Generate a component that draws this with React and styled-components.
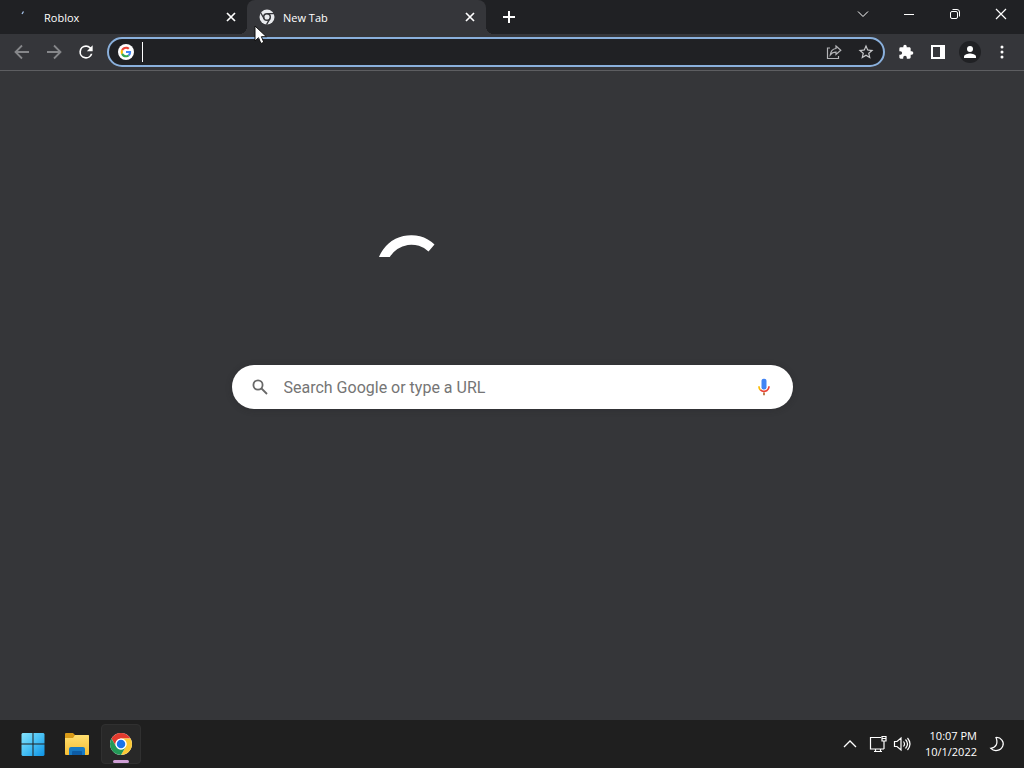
import React from 'react';
import styled, { createGlobalStyle } from 'styled-components';

const GlobalStyle = createGlobalStyle`
  * { box-sizing: border-box; }
  body {
    margin: 0;
    background: #353639;
    font-family: "Open Sans", "Noto Sans", sans-serif;
    font-size: 11px;
    color: #fff;
  }
  button, input { font: inherit; color: inherit; }
  svg { display: block; }
`;

const Desktop = styled.div`
  display: flex;
  flex-direction: column;
  min-height: 100vh;
`;

const TabStrip = styled.header`
  display: flex;
  height: 34px;
  background: #202124;
`;

const Tabs = styled.div`
  display: flex;
  padding-left: 8px;
`;

const Tab = styled.div`
  position: relative;
  display: flex;
  align-items: center;
  width: 239px;
  padding: 0 8px 0 12px;
  border-radius: 8px 8px 0 0;
  background: ${(p) => (p.$active ? '#35363a' : 'transparent')};

  &::before, &::after {
    content: "";
    display: ${(p) => (p.$active ? 'block' : 'none')};
    position: absolute;
    bottom: 0;
    width: 8px;
    height: 8px;
  }
  &::before {
    left: -8px;
    background: radial-gradient(circle at 0 0, transparent 8px, #35363a 8px);
  }
  &::after {
    right: -8px;
    background: radial-gradient(circle at 100% 0, transparent 8px, #35363a 8px);
  }
`;

const TabButton = styled.button`
  display: flex;
  flex: 1;
  align-items: center;
  gap: 8px;
  height: 34px;
  padding: 0;
  border: 0;
  background: none;
  text-align: left;
`;

const IconButton = styled.button`
  display: grid;
  place-items: center;
  flex: none;
  width: ${(p) => p.$w || 32}px;
  height: ${(p) => p.$h || 32}px;
  padding: 0;
  border: 0;
  background: none;
  color: ${(p) => p.$color || '#fff'};
`;

const NewTabButton = styled(IconButton)`
  margin: 3px 0 0 9px;
`;

const WindowControls = styled.div`
  display: flex;
  margin-left: auto;
`;

const Pointer = styled.svg`
  position: absolute;
  left: 7px;
  top: 25px;
  z-index: 2;
`;

const Toolbar = styled.div`
  display: flex;
  align-items: center;
  height: 37px;
  padding: 0 6px;
  background: #35363a;
  border-bottom: 1px solid #5d5e61;
`;

const AddressBar = styled.form`
  display: flex;
  flex: 1;
  align-items: center;
  height: 30px;
  margin: 0 5px;
  padding: 0 1px 0 9px;
  border: 2px solid #8ab0dc;
  border-radius: 15px;
  background: #202124;
`;

const AddressInput = styled.input`
  flex: 1;
  min-width: 0;
  height: 20px;
  margin-left: 8px;
  padding: 0 4px;
  border: 0;
  border-left: 1px solid #fff;
  outline: 0;
  background: none;
  font-size: 14px;
`;

const Page = styled.main`
  display: flex;
  flex: 1;
  flex-direction: column;
  align-items: center;
  gap: 42px;
  padding: 160px 32px 32px;
  background: #353639;
`;

const SearchBox = styled.form`
  display: flex;
  align-items: center;
  width: 100%;
  max-width: 561px;
  height: 44px;
  padding: 0 13px 0 20px;
  border-radius: 22px;
  background: #fff;
  box-shadow: 0 1px 6px rgba(32, 33, 36, 0.28);
`;

const SearchInput = styled.input`
  flex: 1;
  min-width: 0;
  margin-left: 16px;
  padding: 0;
  border: 0;
  outline: 0;
  background: none;
  color: #202124;
  font-family: Roboto, sans-serif;
  font-size: 16px;
  &::placeholder { color: #757575; opacity: 1; }
`;

const Taskbar = styled.footer`
  display: flex;
  align-items: center;
  justify-content: space-between;
  height: 48px;
  padding: 0 11px 0 13px;
  background: #1f1f1f;
`;

const TaskGroup = styled.div`
  display: flex;
  align-items: center;
  gap: ${(p) => p.$gap || 0}px;
`;

const TaskButton = styled.button`
  position: relative;
  display: grid;
  place-items: center;
  width: 40px;
  height: 40px;
  padding: 0;
  border: 1px solid ${(p) => (p.$active ? '#303030' : 'transparent')};
  border-radius: 4px;
  background: ${(p) => (p.$active ? '#282828' : 'none')};

  &::after {
    content: "";
    display: ${(p) => (p.$active ? 'block' : 'none')};
    position: absolute;
    bottom: 0;
    left: 11px;
    width: 16px;
    height: 3px;
    border-radius: 2px;
    background: #cf9fd6;
  }
`;

const Clock = styled.button`
  padding: 0;
  border: 0;
  margin: 0 4px 0 11px;
  background: none;
  text-align: right;
  line-height: 16px;
`;

const Line = ({ size = 16, width = 1, children }) => (
  <svg width={size} height={size} viewBox={`0 0 ${size} ${size}`} fill="none" stroke="currentColor" strokeWidth={width} aria-hidden="true">
    {children}
  </svg>
);

const Solid = ({ size = 18, d }) => (
  <svg width={size} height={size} viewBox="0 0 24 24" fill="currentColor" aria-hidden="true">
    <path d={d} />
  </svg>
);

const CloseGlyph = () => (
  <Line width={1.7}>
    <path d="M4 4l8 8M12 4l-8 8" />
  </Line>
);

const LoadingIcon = () => (
  <svg width="16" height="16" viewBox="0 0 16 16" fill="none" stroke="#a9c7ee" aria-hidden="true">
    <path d="M2 5l1.5-2.5" strokeWidth="1.3" />
  </svg>
);

const MonoChrome = () => (
  <svg width="16" height="16" viewBox="0 0 16 16" aria-hidden="true">
    <circle cx="8" cy="8" r="7.500" fill="#e8eaed" />
    <circle cx="8" cy="8" r="3.300" fill="#e8eaed" stroke="#35363a" strokeWidth="1.500" />
    <path d="M8 4.700h7M5.100 9.600L1.700 3.700M10.900 9.600l-3.400 6" stroke="#35363a" strokeWidth="1.300" />
  </svg>
);

const GoogleIcon = () => (
  <svg width="16" height="16" viewBox="-12 -12 72 72" aria-hidden="true">
    <circle cx="24" cy="24" r="36" fill="#fff" />
    <path fill="#EA4335" d="M24 9.5c3.54 0 6.71 1.22 9.21 3.6l6.85-6.85C35.9 2.38 30.47 0 24 0 14.62 0 6.51 5.38 2.56 13.22l7.98 6.19C12.43 13.72 17.74 9.5 24 9.5z" />
    <path fill="#4285F4" d="M46.98 24.55c0-1.57-.15-3.09-.38-4.55H24v9.02h12.94c-.58 2.96-2.26 5.48-4.78 7.18l7.73 6c4.51-4.18 7.09-10.36 7.09-17.65z" />
    <path fill="#FBBC05" d="M10.53 28.59A14.5 14.5 0 0 1 9.77 24c0-1.6.27-3.14.76-4.59l-7.98-6.19A23.9 23.9 0 0 0 0 24c0 3.88.92 7.54 2.56 10.78z" />
    <path fill="#34A853" d="M24 48c6.48 0 11.93-2.13 15.89-5.81l-7.73-6c-2.15 1.45-4.92 2.3-8.16 2.3-6.26 0-11.57-4.22-13.47-9.91l-7.98 6.19C6.51 42.62 14.62 48 24 48z" />
  </svg>
);

const Mic = () => (
  <svg width="20" height="20" viewBox="0 0 24 24" aria-hidden="true">
    <rect x="9" y="2" width="6" height="13" rx="2.600" fill="#4285f4" />
    <path d="M11 18.500h2V22h-2z" fill="#b0682c" />
    <path d="M5 11h2c0 1.500.5 2.800 1.400 3.700L7 16.200C5.700 15 5 13 5 11z" fill="#fbbc04" />
    <path d="M7.700 15.400C10.100 18 15 18.100 17 14.500c.7-1 1-2.100 1-3.500" fill="none" stroke="#ea4335" strokeWidth="2" />
  </svg>
);

const WindowsLogo = () => (
  <svg width="24" height="24" viewBox="0 0 24 24" aria-hidden="true">
    <defs>
      <linearGradient id="winBlue" x1="0" y1="0" x2="24" y2="24" gradientUnits="userSpaceOnUse">
        <stop stopColor="#8ae5fc" />
        <stop offset=".5" stopColor="#48c1f5" />
        <stop offset="1" stopColor="#0c91e4" />
      </linearGradient>
    </defs>
    <path fill="url(#winBlue)" d="M1.500 1H11.500V11.500H.5V2zM12.500 1H22.500l1 1v9.500h-11zM.5 12.500h11V24H1.500L.5 23zM12.500 12.500h11V23l-1 1h-10z" />
  </svg>
);

const Folder = () => (
  <svg width="26" height="24" viewBox="0 0 26 24" aria-hidden="true">
    <defs>
      <linearGradient id="folderFront" x1="0" y1="0" x2="0" y2="1">
        <stop stopColor="#ffdf70" />
        <stop offset="1" stopColor="#f5bd33" />
      </linearGradient>
    </defs>
    <path fill="#d99a17" d="M1 2q0-1 1-1h7l2 2h13q1 0 1 1v7H1z" />
    <path fill="url(#folderFront)" d="M1 6h8l2-3h13q1 0 1 1v18q0 1-1 1H2q-1 0-1-1z" />
    <path fill="#187ac3" d="M5 23v-6q0-2 2-2h12q2 0 2 2v6z" />
    <path fill="#0d5ca6" d="M8 23v-3q0-1 1-1h8q1 0 1 1v3z" />
  </svg>
);

const ChromeLogo = () => (
  <svg width="24" height="24" viewBox="0 0 48 48" aria-hidden="true">
    <circle cx="24" cy="24" r="22" fill="#fff" />
    <path fill="#e33b2e" d="M4.950 13A22 22 0 0 1 43.050 13H24A11 11 0 0 0 14.470 29.500z" />
    <path fill="#fcc934" d="M43.050 13A22 22 0 0 1 24 46L33.530 29.500A11 11 0 0 0 24 13z" />
    <path fill="#239957" d="M24 46A22 22 0 0 1 4.950 13L14.470 29.500A11 11 0 0 0 33.530 29.500z" />
    <circle cx="24" cy="24" r="11" fill="#fff" />
    <circle cx="24" cy="24" r="8.500" fill="#1a73e8" />
  </svg>
);

const stop = (event) => event.preventDefault();

export default function App() {
  return (
    <Desktop>
      <GlobalStyle />
      <TabStrip>
        <Tabs role="tablist">
          <Tab>
            <TabButton role="tab" aria-selected="false">
              <LoadingIcon />
              Roblox
            </TabButton>
            <IconButton $w={16} $h={16} aria-label="Close Roblox"><CloseGlyph /></IconButton>
          </Tab>
          <Tab $active>
            <TabButton role="tab" aria-selected="true">
              <MonoChrome />
              New Tab
            </TabButton>
            <IconButton $w={16} $h={16} aria-label="Close New Tab"><CloseGlyph /></IconButton>
            <Pointer width="14" height="20" viewBox="0 0 14 20" aria-hidden="true">
              <path d="M1 1v15l3.500-3.300 2.400 5.800 2.900-1.200-2.400-5.600h5z" fill="#fff" stroke="#111" strokeWidth="1" />
            </Pointer>
          </Tab>
        </Tabs>
        <NewTabButton $w={28} $h={28} aria-label="New tab">
          <Line width={2}><path d="M8 2v12M2 8h12" /></Line>
        </NewTabButton>
        <WindowControls>
          <IconButton $w={46} $h={28} aria-label="Search tabs"><Line><path d="M3 5.500l5 5 5-5" /></Line></IconButton>
          <IconButton $w={46} $h={28} aria-label="Minimize"><Line><path d="M3 8.500h10" /></Line></IconButton>
          <IconButton $w={46} $h={28} aria-label="Restore">
            <Line><rect x="3.500" y="5.500" width="7" height="7" rx="1.500" /><path d="M5.500 3.500H10Q12.500 3.500 12.500 6v4.500" /></Line>
          </IconButton>
          <IconButton $w={46} $h={28} aria-label="Close window"><Line width={1.2}><path d="M3 3l10 10M13 3L3 13" /></Line></IconButton>
        </WindowControls>
      </TabStrip>

      <Toolbar>
        <IconButton $color="#86878a" aria-label="Back"><Line width={1.8}><path d="M15 8H2M8 1.500L1.500 8 8 14.500" /></Line></IconButton>
        <IconButton $color="#86878a" aria-label="Forward"><Line width={1.8}><path d="M1 8h13M8 1.500L14.500 8 8 14.500" /></Line></IconButton>
        <IconButton aria-label="Reload">
          <Solid size={20} d="M17.650 6.350A7.960 7.960 0 0 0 12 4a8 8 0 1 0 7.730 10h-2.080A6 6 0 1 1 12 6c1.660 0 3.140.69 4.220 1.780L13 11h7V4z" />
        </IconButton>
        <AddressBar onSubmit={stop}>
          <GoogleIcon />
          <AddressInput aria-label="Address and search bar" />
          <IconButton $color="#b4b5b8" aria-label="Share this page">
            <Line width={1.2}>
              <path d="M4 4H1.500v10.500h11V12M10 2l4.800 4.200L10 10.500V8.200c-2.600 0-4.300.7-5.700 2.600C4.700 7.400 6.500 5 10 4.500z" />
            </Line>
          </IconButton>
          <IconButton $color="#c8c9cb" aria-label="Bookmark this tab">
            <Solid d="M22 9.240l-7.190-.62L12 2 9.190 8.630 2 9.240l5.460 4.730L5.820 21 12 17.270 18.180 21l-1.630-7.030zM12 15.400l-3.760 2.270 1-4.280-3.320-2.880 4.380-.38L12 6.100l1.710 4.040 4.380.38-3.320 2.880 1 4.280z" />
          </IconButton>
        </AddressBar>
        <IconButton aria-label="Extensions">
          <Solid size={16} d="M20.500 11H19V7c0-1.100-.9-2-2-2h-4V3.500a2.500 2.500 0 0 0-5 0V5H4a2 2 0 0 0-1.990 2v3.800H3.500a2.700 2.700 0 0 1 0 5.400H2V20c0 1.100.9 2 2 2h3.800v-1.500a2.700 2.700 0 0 1 5.400 0V22H17c1.100 0 2-.9 2-2v-4h1.500a2.500 2.500 0 0 0 0-5z" />
        </IconButton>
        <IconButton aria-label="Side panel">
          <Line width={2}><path d="M2 2h12v12H2z" /><path d="M10 2h4v12h-4z" fill="currentColor" stroke="none" /></Line>
        </IconButton>
        <IconButton aria-label="Profile">
          <svg width="24" height="24" viewBox="0 0 24 24" aria-hidden="true">
            <circle cx="12" cy="12" r="11" fill="#202124" />
            <circle cx="12" cy="9" r="3" fill="#fff" />
            <path d="M6 18v-1.500c0-2 4-3 6-3s6 1 6 3V18z" fill="#fff" />
          </svg>
        </IconButton>
        <IconButton aria-label="Menu">
          <svg width="16" height="16" viewBox="0 0 16 16" fill="#fff" aria-hidden="true">
            <circle cx="8" cy="3" r="1.500" /><circle cx="8" cy="8" r="1.500" /><circle cx="8" cy="13" r="1.500" />
          </svg>
        </IconButton>
      </Toolbar>

      <Page>
        <svg width="272" height="92" viewBox="0 0 272 92" aria-hidden="true">
          <path fill="#fff" d="M3 26A34.300 34.300 0 0 1 58.500 13.500L52.500 20.500A25 25 0 0 0 13.800 26z" />
        </svg>
        <SearchBox role="search" onSubmit={stop}>
          <IconButton $w={16} $h={24} $color="#686868" aria-label="Search">
            <Line width={1.8}><circle cx="6" cy="6" r="4.600" /><path d="M9.500 9.500L15 15" /></Line>
          </IconButton>
          <SearchInput aria-label="Search Google or type a URL" placeholder="Search Google or type a URL" />
          <IconButton aria-label="Search by voice"><Mic /></IconButton>
        </SearchBox>
      </Page>

      <Taskbar>
        <TaskGroup $gap={4}>
          <TaskButton aria-label="Start"><WindowsLogo /></TaskButton>
          <TaskButton aria-label="File Explorer"><Folder /></TaskButton>
          <TaskButton $active aria-label="Google Chrome"><ChromeLogo /></TaskButton>
        </TaskGroup>
        <TaskGroup>
          <IconButton aria-label="Show hidden icons"><Line width={1.3}><path d="M2 11l6-6 6 6" /></Line></IconButton>
          <IconButton $w={24} aria-label="Network">
            <Line size={18} width={1.2}><path d="M12 2.500H1.500v11.500h13.500M5 16.500h8M6.500 14v2M11.500 14v2M13 1.500h4v4.500h-4zM13 3.500h4M15 6v8" /></Line>
          </IconButton>
          <IconButton $w={24} aria-label="Volume">
            <Line size={18} width={1.2}><path d="M1.500 6.500H4L8 3v12l-4-3.500H1.500zM10.500 6.500q2 2.500 0 5M12.500 4.500q4 4.500 0 9M14.500 3q5 6 0 12" /></Line>
          </IconButton>
          <Clock aria-label="Date and time">10:07 PM<br />10/1/2022</Clock>
          <IconButton aria-label="Do not disturb">
            <Line width={1.2}><path d="M7 1.500C12 1 15.500 6 13.800 10c-2 5-8.600 6-12 2.300C6.500 11.800 9.500 8 7 1.500z" /></Line>
          </IconButton>
        </TaskGroup>
      </Taskbar>
    </Desktop>
  );
}
